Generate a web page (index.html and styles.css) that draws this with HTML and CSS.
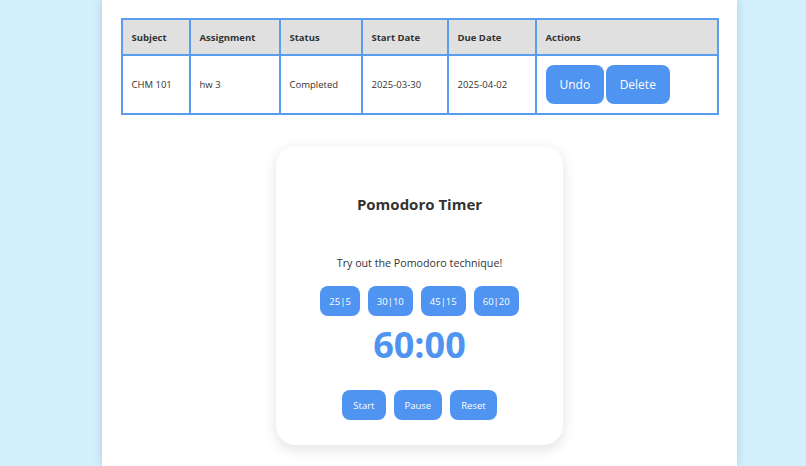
FILE: index.html
```html
<!DOCTYPE html>
<html lang="en">
<head>
    <meta charset="UTF-8">
    <meta name="viewport" content="width=device-width, initial-scale=1.0">
    <title>Assignments</title>
    <link rel="stylesheet" href="styles.css">
</head>
<body>

    <div class="container">
        <!-- Bảng bài tập -->
        <table class="task-table">
            <thead>
                <tr>
                    <th class="col-subject">Subject</th>
                    <th class="col-assignment">Assignment</th>
                    <th class="col-status">Status</th>
                    <th class="col-start">Start Date</th>
                    <th class="col-due">Due Date</th>
                    <th>Actions</th>
                </tr>
            </thead>
            <tbody>
                <tr>
                    <td>CHM 101</td>
                    <td>hw 3</td>
                    <td>Completed</td>
                    <td>2025-03-30</td>
                    <td>2025-04-02</td>
                    <td class="actions">
                        <button class="action-btn">Undo</button>
                        <button class="action-btn">Delete</button>
                    </td>
                </tr>
            </tbody>
        </table>

        <!-- Pomodoro -->
        <div class="pomodoro">
            <h2 class="pomodoro-title">Pomodoro Timer</h2>
            <p class="pomodoro-text">Try out the Pomodoro technique!</p>
            <div class="presets">
                <button class="small-btn">25|5</button>
                <button class="small-btn">30|10</button>
                <button class="small-btn">45|15</button>
                <button class="small-btn">60|20</button>
            </div>
            <div class="timer" id="timer">60:00</div>
            <div class="controls">
                <button class="small-btn">Start</button>
                <button class="small-btn">Pause</button>
                <button class="small-btn">Reset</button>
            </div>
        </div>
    </div>

</body>
</html>
```

FILE: styles.css
```css
body {
    font-family: 'Open Sans', 'Noto Sans', sans-serif;
    background-color: #d3effb;
    margin: 0;
    height: 466px;
    overflow: hidden;
    display: flex;
    padding-left: 102px;
}

.container {
    background-color: #ffffff;
    width: 635px;
    padding: 18px 19px 0;
    box-sizing: border-box;
    box-shadow: 0 0 8px rgba(60, 110, 140, 0.25);
    display: flex;
    flex-direction: column;
    align-items: center;
}

.task-table {
    width: 598px;
    border-collapse: collapse;
    border: 2px solid #5c9ced;
    font-size: 9.5px;
    color: #333;
}

.task-table th,
.task-table td {
    border: 2px solid #5c9ced;
    text-align: left;
    padding: 0 9px;
}

.task-table th {
    background-color: #e0e0e0;
    height: 34px;
    font-weight: 700;
}

.task-table td {
    height: 57px;
}

.col-subject { width: 48px; }
.col-assignment { width: 70px; }
.col-status { width: 62px; }
.col-start { width: 66px; }
.col-due { width: 68px; }

.action-btn {
    background-color: #4f94f0;
    color: white;
    border: none;
    border-radius: 8px;
    height: 39px;
    padding: 0 14px;
    margin-right: -1px;
    font-family: inherit;
    font-size: 12px;
    cursor: pointer;
}

.pomodoro {
    margin-top: 31px;
    width: 287px;
    height: 299px;
    box-sizing: border-box;
    background-color: #ffffff;
    border-radius: 20px;
    box-shadow: 0 4px 14px rgba(0, 0, 0, 0.12);
    display: flex;
    flex-direction: column;
    align-items: center;
    padding-top: 46px;
}

.pomodoro-title {
    margin: 0;
    font-size: 15px;
    font-weight: 700;
    color: #333;
    line-height: 24px;
}

.pomodoro-text {
    margin: 39px 0 0;
    font-size: 10.7px;
    color: #333;
    line-height: 16px;
}

.presets, .controls {
    display: flex;
    gap: 8px;
}

.presets {
    margin-top: 15px;
}

.presets .small-btn {
    padding: 0 9px;
}

.small-btn {
    background-color: #4f94f0;
    color: white;
    border: none;
    border-radius: 8px;
    height: 30px;
    padding: 0 11px;
    font-family: inherit;
    font-size: 9.5px;
    cursor: pointer;
}

.timer {
    margin-top: 7px;
    font-size: 36px;
    font-weight: 700;
    color: #4f94f0;
    line-height: 44px;
}

.controls {
    margin-top: 23px;
}
```
